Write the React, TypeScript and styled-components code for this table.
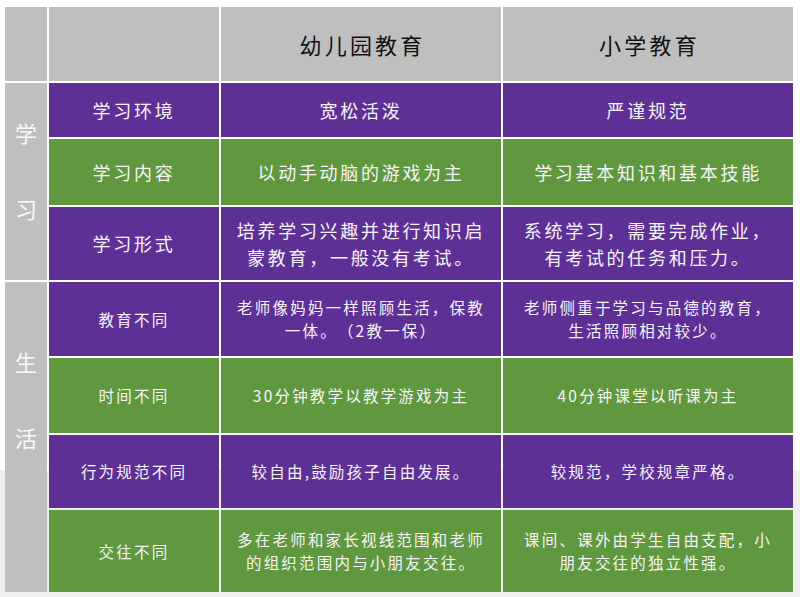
import React from "react";
import styled, { createGlobalStyle } from "styled-components";

type Tone = "purple" | "green";

interface RowData {
  label: string;
  tone: Tone;
  small?: boolean;
  kinder: string[];
  primary: string[];
}

const colors: Record<Tone, string> = {
  purple: "#5d3096",
  green: "#5f983e",
};

const GlobalStyle = createGlobalStyle`
  html, body {
    margin: 0;
    padding: 0;
  }
  body {
    background: linear-gradient(#ffffff 0 470px, #efefef 470px);
    font-family: "Noto Sans CJK SC", "Noto Sans", sans-serif;
  }
`;

const Page = styled.div`
  width: 800px;
  height: 597px;
  padding: 7px 0 0 5px;
  box-sizing: border-box;
`;

const Table = styled.div`
  display: grid;
  grid-template-columns: 42px 170px 280px 290px;
  grid-template-rows: 74px 54px 66px 73px 74px 75px 73px 82px;
  gap: 2px;
  width: 788px;
`;

const HeaderCell = styled.div`
  background: #bfbfbf;
  display: flex;
  align-items: center;
  justify-content: center;
  color: #111;
  font-size: 22px;
  letter-spacing: 3.2px;
  padding-left: 3px;
`;

const SideCell = styled.div<{ $start: number; $span: number; $pad: number }>`
  grid-column: 1;
  grid-row: ${({ $start, $span }) => `${$start} / span ${$span}`};
  background: #bfbfbf;
  color: #fafafa;
  font-size: 22px;
  line-height: 76px;
  text-align: center;
  padding-top: ${({ $pad }) => $pad}px;
  box-sizing: border-box;
`;

const Cell = styled.div<{ $tone: Tone; $small?: boolean }>`
  background: ${({ $tone }) => colors[$tone]};
  color: #f7f4fa;
  display: flex;
  flex-direction: column;
  align-items: center;
  justify-content: center;
  text-align: center;
  white-space: nowrap;
  text-spacing-trim: space-all;
  font-size: ${({ $small }) => ($small ? "15.5px" : "18px")};
  letter-spacing: ${({ $small }) => ($small ? "2.2px" : "2.7px")};
  line-height: ${({ $small }) => ($small ? "23px" : "27px")};
`;

const Line = styled.span`
  display: block;
`;

const rows: RowData[] = [
  { label: "学习环境", tone: "purple", kinder: ["宽松活泼"], primary: ["严谨规范"] },
  { label: "学习内容", tone: "green", kinder: ["以动手动脑的游戏为主"], primary: ["学习基本知识和基本技能"] },
  {
    label: "学习形式",
    tone: "purple",
    kinder: ["培养学习兴趣并进行知识启", "蒙教育，一般没有考试。"],
    primary: ["系统学习，需要完成作业，", "有考试的任务和压力。"],
  },
  {
    label: "教育不同",
    tone: "purple",
    small: true,
    kinder: ["老师像妈妈一样照顾生活，保教", "一体。（2教一保）"],
    primary: ["老师侧重于学习与品德的教育，", "生活照顾相对较少。"],
  },
  {
    label: "时间不同",
    tone: "green",
    small: true,
    kinder: ["30分钟教学以教学游戏为主"],
    primary: ["40分钟课堂以听课为主"],
  },
  {
    label: "行为规范不同",
    tone: "purple",
    small: true,
    kinder: ["较自由,鼓励孩子自由发展。"],
    primary: ["较规范，学校规章严格。"],
  },
  {
    label: "交往不同",
    tone: "green",
    small: true,
    kinder: ["多在老师和家长视线范围和老师", "的组织范围内与小朋友交往。"],
    primary: ["课间、课外由学生自由支配，小", "朋友交往的独立性强。"],
  },
];

const App: React.FC = () => {
  return (
    <Page>
      <GlobalStyle />
      <Table>
        <HeaderCell />
        <HeaderCell />
        <HeaderCell>幼儿园教育</HeaderCell>
        <HeaderCell>小学教育</HeaderCell>

        <SideCell $start={2} $span={3} $pad={11}>
          <Line>学</Line>
          <Line>习</Line>
        </SideCell>
        <SideCell $start={5} $span={4} $pad={41}>
          <Line>生</Line>
          <Line>活</Line>
        </SideCell>

        {rows.map((row) => (
          <React.Fragment key={row.label}>
            <Cell $tone={row.tone} $small={row.small}>
              {row.label}
            </Cell>
            <Cell $tone={row.tone} $small={row.small}>
              {row.kinder.map((l) => (
                <Line key={l}>{l}</Line>
              ))}
            </Cell>
            <Cell $tone={row.tone} $small={row.small}>
              {row.primary.map((l) => (
                <Line key={l}>{l}</Line>
              ))}
            </Cell>
          </React.Fragment>
        ))}
      </Table>
    </Page>
  );
};

export default App;
